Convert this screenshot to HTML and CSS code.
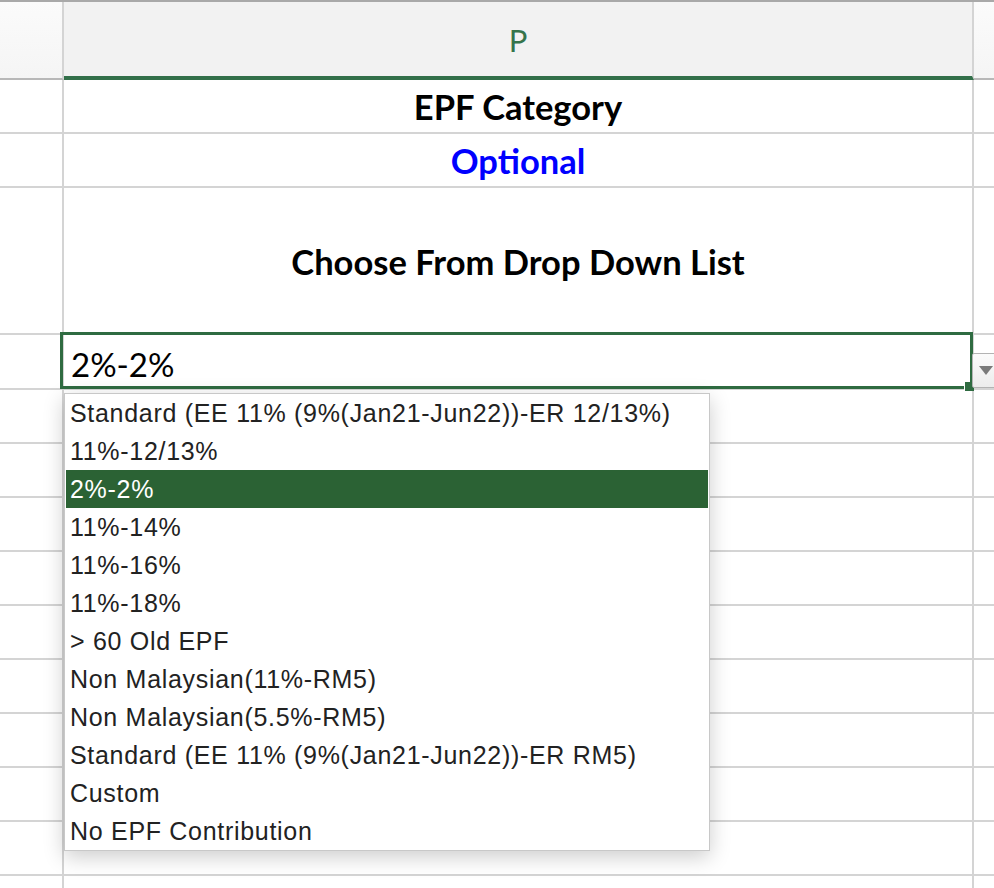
FILE: index.html
```html
<!DOCTYPE html>
<html lang="en">
<head>
    <meta charset="UTF-8">
    <title>EPF Category</title>
    <link rel="stylesheet" href="styles.css">
</head>
<body>
    <div class="sheet">
        <div class="row head-row">
            <div class="rh head-side"></div>
            <div class="cell col-head">P</div>
            <div class="cq head-side"></div>
        </div>

        <div class="row">
            <div class="rh"></div>
            <div class="cell title">EPF Category</div>
            <div class="cq"></div>
        </div>
        <div class="row">
            <div class="rh"></div>
            <div class="cell title optional">Optional</div>
            <div class="cq"></div>
        </div>
        <div class="row tall">
            <div class="rh"></div>
            <div class="cell title">Choose From Drop Down List</div>
            <div class="cq"></div>
        </div>
        <div class="row active-row">
            <div class="rh"></div>
            <div class="cell value selected">
                2%-2%
                <span class="fill-handle"></span>
                <span class="drop-button"><span class="drop-arrow"></span></span>

                <ul class="drop-list">
                    <li>Standard (EE 11% (9%(Jan21-Jun22))-ER 12/13%)</li>
                    <li>11%-12/13%</li>
                    <li class="current">2%-2%</li>
                    <li>11%-14%</li>
                    <li>11%-16%</li>
                    <li>11%-18%</li>
                    <li>&gt; 60 Old EPF</li>
                    <li>Non Malaysian(11%-RM5)</li>
                    <li>Non Malaysian(5.5%-RM5)</li>
                    <li>Standard (EE 11% (9%(Jan21-Jun22))-ER RM5)</li>
                    <li>Custom</li>
                    <li>No EPF Contribution</li>
                </ul>
            </div>
            <div class="cq"></div>
        </div>

        <div class="row"><div class="rh"></div><div class="cell"></div><div class="cq"></div></div>
        <div class="row"><div class="rh"></div><div class="cell"></div><div class="cq"></div></div>
        <div class="row"><div class="rh"></div><div class="cell"></div><div class="cq"></div></div>
        <div class="row"><div class="rh"></div><div class="cell"></div><div class="cq"></div></div>
        <div class="row"><div class="rh"></div><div class="cell"></div><div class="cq"></div></div>
        <div class="row"><div class="rh"></div><div class="cell"></div><div class="cq"></div></div>
        <div class="row"><div class="rh"></div><div class="cell"></div><div class="cq"></div></div>
        <div class="row"><div class="rh"></div><div class="cell"></div><div class="cq"></div></div>
        <div class="row"><div class="rh"></div><div class="cell"></div><div class="cq"></div></div>
        <div class="row"><div class="rh"></div><div class="cell"></div><div class="cq"></div></div>
    </div>
</body>
</html>
```

FILE: styles.css
```css
body {
    margin: 0;
    background: white;
    font-family: Lato, "Liberation Sans", sans-serif;
    overflow: hidden;
}

.sheet {
    width: 994px;
    height: 888px;
    overflow: hidden;
}

.row {
    display: flex;
    height: 54px;
}

.rh, .cell, .cq {
    box-sizing: border-box;
    border-right: 2px solid #d4d4d4;
    border-bottom: 2px solid #d4d4d4;
}

.rh {
    width: 64px;
    flex-shrink: 0;
}

.cell {
    width: 910px;
    flex-shrink: 0;
}

.cq {
    flex: 1;
    border-right: none;
}

/* column header */
.head-row {
    height: 80px;
    border-top: 2px solid #a9a9a9;
    box-sizing: border-box;
}

.head-side {
    background: linear-gradient(to bottom, #fbfbfb, #f5f5f5);
    border-bottom-color: #b8b8b8;
}

.col-head {
    background: #f2f2f2;
    border-bottom: 4px solid #33704a;
    color: #35744b;
    font-size: 31px;
    display: flex;
    align-items: center;
    justify-content: center;
    padding-top: 2px;
}

/* cells */
.title {
    display: flex;
    align-items: center;
    justify-content: center;
    font-weight: bold;
    font-size: 34.5px;
    color: #000;
    padding-top: 1px;
}

.optional {
    color: #0000ff;
}

.tall {
    height: 147px;
}

.active-row {
    height: 55px;
}

.value {
    display: flex;
    align-items: center;
    padding: 5px 0 0 7px;
    font-size: 33px;
    color: #000;
}

.selected {
    position: relative;
}

.selected::before {
    content: "";
    position: absolute;
    top: -3px;
    left: -4px;
    right: -1px;
    bottom: -1px;
    border: 3px solid #2f6b41;
    pointer-events: none;
}

.fill-handle {
    position: absolute;
    right: -2px;
    bottom: -3px;
    width: 9px;
    height: 9px;
    background: #2f6b41;
    box-shadow: -1px 0 0 #fff;
}

.drop-button {
    position: absolute;
    left: 100%;
    top: 18px;
    width: 24px;
    height: 35px;
    box-sizing: border-box;
    border: 1px solid #b3b3b3;
    border-radius: 2px;
    background: linear-gradient(to bottom, #fbfbfb, #ececec);
    z-index: 2;
}

.drop-arrow {
    position: absolute;
    left: 6px;
    top: 12px;
    width: 0;
    height: 0;
    border-left: 7px solid transparent;
    border-right: 7px solid transparent;
    border-top: 9px solid #7a7a7a;
}

/* validation list */
.drop-list {
    position: absolute;
    left: 0;
    top: 58px;
    width: 646px;
    margin: 0;
    padding: 0 1px;
    box-sizing: border-box;
    list-style: none;
    background: white;
    border: 1px solid #c8c8c8;
    box-shadow: 0 6px 20px rgba(0, 0, 0, 0.2);
    font-family: "Liberation Sans", Arial, sans-serif;
    font-size: 25px;
    letter-spacing: 0.7px;
    color: #222;
    z-index: 3;
}

.drop-list li {
    height: 38px;
    line-height: 38px;
    padding-left: 4px;
    white-space: nowrap;
}

.drop-list li.current {
    background: #2b6234;
    color: white;
}
```
